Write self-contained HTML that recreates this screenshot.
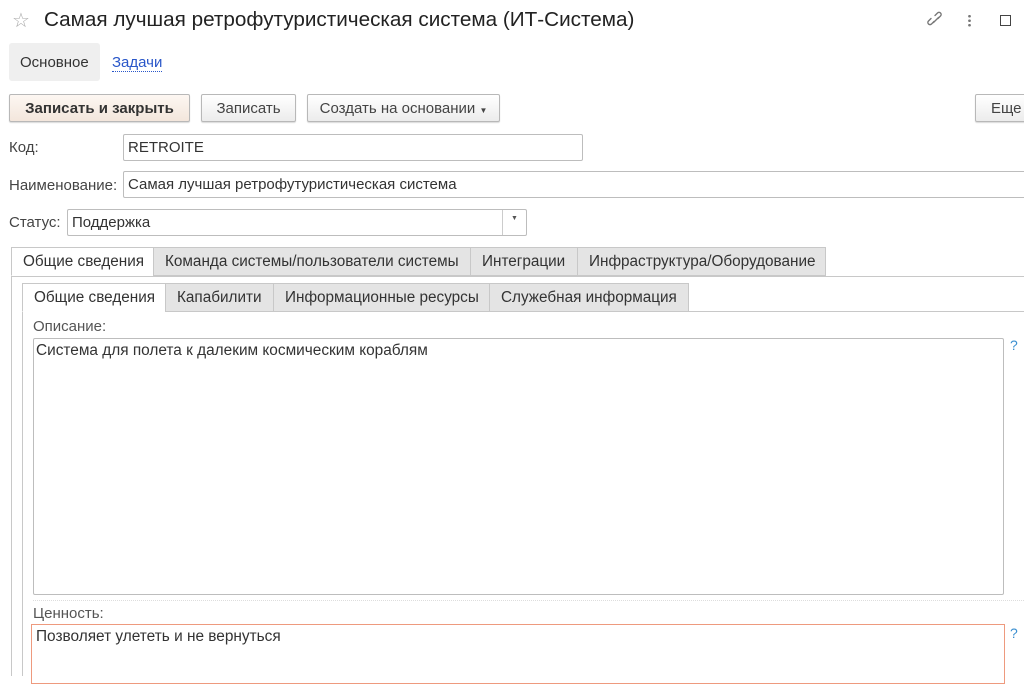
<!DOCTYPE html>
<html><head><meta charset="utf-8"><style>
body{margin:0;width:1024px;height:676px;overflow:hidden;background:#fff;font-family:"Liberation Sans",sans-serif;color:#333;position:relative}
.a{position:absolute}
.btn{position:absolute;top:94px;height:28px;border:1px solid #b8b8b8;border-radius:2px;background:linear-gradient(#fff,#ececec);box-shadow:0 1px 1px rgba(0,0,0,.15);font-size:15px;line-height:27px;text-align:center;color:#444;box-sizing:border-box}
.inp{position:absolute;border:1px solid #bdbdbd;border-radius:2px;height:27px;box-sizing:border-box;font-size:15px;line-height:25px;padding-left:4px;color:#333}
.lbl{position:absolute;font-size:15px;color:#444}
.tab{position:absolute;height:29px;box-sizing:border-box;border:1px solid #c8c8c8;background:#e4e4e4;font-size:15.3px;line-height:28px;padding-left:11px;color:#333;white-space:nowrap}
.tab.on{background:#fff;border-bottom-color:#fff}
.q{position:absolute;color:#3b8fd0;font-size:14px}
</style></head><body>
<div class="a" style="left:12px;top:8px;font-size:20px;color:#aaa">☆</div>
<div class="a" style="left:44px;top:8px;font-size:20.7px;color:#222">Самая лучшая ретрофутуристическая система (ИТ-Система)</div>
<svg class="a" style="left:926px;top:10px" width="20" height="20" viewBox="0 0 20 20"><g fill="none" stroke="#777" stroke-width="1.4" stroke-linecap="round"><path d="M8 11.5l-2.5 2.5a2 2 0 0 1-3-3L5 8.5"/><path d="M12 8.5l2.5-2.5a2 2 0 0 0-3-3L9 5.5"/><path d="M7.5 12.5l5-5"/></g></svg>
<div class="a" style="left:968px;top:14px;width:3px;height:13px;background:radial-gradient(circle,#777 1.2px,transparent 1.5px) 0 0/3px 4.5px"></div>
<div class="a" style="left:1000px;top:15px;width:9px;height:9px;border:1.3px solid #444"></div>
<div class="a" style="left:9px;top:43px;width:91px;height:38px;background:#efefef;border-radius:3px"></div>
<div class="a" style="left:20px;top:54px;font-size:15px;color:#333">Основное</div>
<div class="a" style="left:112px;top:54px;font-size:15px;color:#2a57c9;border-bottom:1px dotted #2a57c9;line-height:17px">Задачи</div>
<div class="btn" style="left:9px;width:181px;font-weight:bold;background:linear-gradient(#fdf7f2,#f3e6dc);color:#333">Записать и закрыть</div>
<div class="btn" style="left:201px;width:95px">Записать</div>
<div class="btn" style="left:307px;width:193px">Создать на основании <span style="font-size:8px">▼</span></div>
<div class="btn" style="left:975px;width:60px;text-align:left;padding-left:15px">Еще</div>
<div class="lbl" style="left:9px;top:139px">Код:</div>
<div class="inp" style="left:123px;top:134px;width:460px">RETROITE</div>
<div class="lbl" style="left:9px;top:177px">Наименование:</div>
<div class="inp" style="left:123px;top:171px;width:910px">Самая лучшая ретрофутуристическая система</div>
<div class="lbl" style="left:9px;top:214px">Статус:</div>
<div class="inp" style="left:67px;top:209px;width:460px">Поддержка</div>
<div class="a" style="left:502px;top:210px;width:1px;height:25px;background:#ccc"></div>
<div class="a" style="left:511px;top:215px;font-size:7px;color:#555">▼</div>
<div class="a" style="left:11px;top:276px;width:1013px;height:1px;background:#c8c8c8"></div>
<div class="a" style="left:11px;top:276px;width:1px;height:400px;background:#c8c8c8"></div>
<div class="tab on" style="left:11px;top:247px;width:143px">Общие сведения</div>
<div class="tab" style="left:153px;top:247px;width:318px">Команда системы/пользователи системы</div>
<div class="tab" style="left:470px;top:247px;width:108px">Интеграции</div>
<div class="tab" style="left:577px;top:247px;width:249px">Инфраструктура/Оборудование</div>
<div class="a" style="left:22px;top:311px;width:1002px;height:1px;background:#c8c8c8"></div>
<div class="a" style="left:22px;top:311px;width:1px;height:365px;background:#c8c8c8"></div>
<div class="tab on" style="left:22px;top:283px;width:144px">Общие сведения</div>
<div class="tab" style="left:165px;top:283px;width:109px">Капабилити</div>
<div class="tab" style="left:273px;top:283px;width:217px">Информационные ресурсы</div>
<div class="tab" style="left:489px;top:283px;width:200px">Служебная информация</div>
<div class="lbl" style="left:33px;top:318px;color:#555">Описание:</div>
<div class="a" style="left:33px;top:338px;width:971px;height:257px;border:1px solid #bdbdbd;border-radius:2px;box-sizing:border-box;font-size:15.4px;padding:3px 2px;color:#333">Система для полета к далеким космическим кораблям</div>
<div class="q" style="left:1010px;top:337px">?</div>
<div class="a" style="left:33px;top:600px;width:991px;border-top:1px dotted #ddd"></div>
<div class="lbl" style="left:33px;top:605px;color:#555">Ценность:</div>
<div class="a" style="left:31px;top:624px;width:974px;height:60px;border:1px solid #ee9a7e;box-sizing:border-box;font-size:15.4px;padding:3px 4px;color:#333">Позволяет улететь и не вернуться</div>
<div class="q" style="left:1010px;top:625px">?</div>
</body></html>
